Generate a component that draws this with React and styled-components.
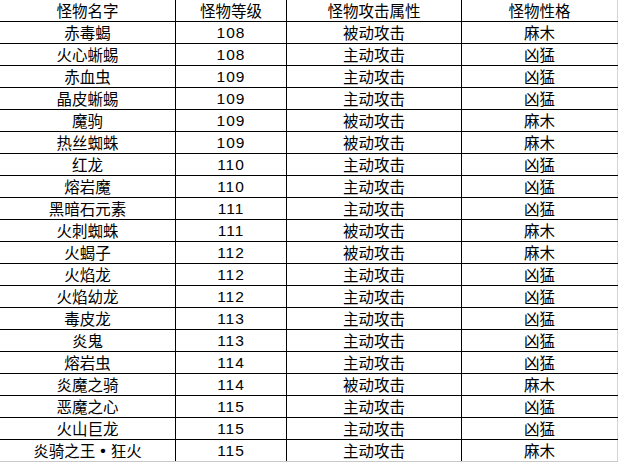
import styled, { createGlobalStyle } from 'styled-components';

const GlobalStyle = createGlobalStyle`
  * { box-sizing: border-box; }
  body {
    margin: 0;
    background: #fff;
    font-family: "Liberation Sans", "Noto Sans CJK SC", sans-serif;
    color: #000;
  }
`;

const Table = styled.div`
  width: 618px;
  display: flex;
  flex-direction: column;
`;

const Row = styled.div`
  display: grid;
  grid-template-columns: 176px 111px 175px 156px;
  height: 22px;
  border-bottom: 1px solid ${(p) => (p.$last ? '#c8c8c8' : '#000')};
`;

const Cell = styled.div`
  display: flex;
  align-items: center;
  justify-content: center;
  font-family: ${(p) =>
    p.$num ? '"Liberation Sans", sans-serif' : '"Noto Sans CJK SC", sans-serif'};
  font-size: ${(p) => (p.$num ? '15.5px' : '15.5px')};
  letter-spacing: ${(p) => (p.$num ? '1px' : '0')};
  line-height: 1;
  white-space: nowrap;
  border-right: 1px solid ${(p) => (p.$edge ? '#d4d4d4' : '#000')};
  padding-top: ${(p) => (p.$head ? '0' : '1px')};
`;

const Dot = styled.span`
  display: inline-block;
  width: 15.5px;
  text-align: center;
  font-family: "Liberation Sans", sans-serif;
  font-weight: bold;
`;

const monsters = [
  ['赤毒蝎', 108, '被动攻击', '麻木'],
  ['火心蜥蜴', 108, '主动攻击', '凶猛'],
  ['赤血虫', 109, '主动攻击', '凶猛'],
  ['晶皮蜥蜴', 109, '主动攻击', '凶猛'],
  ['魔驹', 109, '被动攻击', '麻木'],
  ['热丝蜘蛛', 109, '被动攻击', '麻木'],
  ['红龙', 110, '主动攻击', '凶猛'],
  ['熔岩魔', 110, '主动攻击', '凶猛'],
  ['黑暗石元素', 111, '主动攻击', '凶猛'],
  ['火刺蜘蛛', 111, '被动攻击', '麻木'],
  ['火蝎子', 112, '被动攻击', '麻木'],
  ['火焰龙', 112, '主动攻击', '凶猛'],
  ['火焰幼龙', 112, '主动攻击', '凶猛'],
  ['毒皮龙', 113, '主动攻击', '凶猛'],
  ['炎鬼', 113, '主动攻击', '凶猛'],
  ['熔岩虫', 114, '主动攻击', '凶猛'],
  ['炎魔之骑', 114, '被动攻击', '麻木'],
  ['恶魔之心', 115, '主动攻击', '凶猛'],
  ['火山巨龙', 115, '主动攻击', '凶猛'],
  ['炎骑之王•狂火', 115, '主动攻击', '麻木'],
];

const headers = ['怪物名字', '怪物等级', '怪物攻击属性', '怪物性格'];

function renderName(name) {
  const parts = name.split('•');
  if (parts.length === 1) return name;
  return (
    <>
      {parts[0]}
      <Dot>•</Dot>
      {parts[1]}
    </>
  );
}

export default function App() {
  return (
    <>
      <GlobalStyle />
      <Table>
        <Row>
          {headers.map((h, i) => (
            <Cell key={h} $head $edge={i === 3}>{h}</Cell>
          ))}
        </Row>
        {monsters.map(([name, level, attack, nature], r) => (
          <Row key={name} $last={r === monsters.length - 1}>
            <Cell>{renderName(name)}</Cell>
            <Cell $num>{level}</Cell>
            <Cell>{attack}</Cell>
            <Cell $edge>{nature}</Cell>
          </Row>
        ))}
      </Table>
    </>
  );
}
